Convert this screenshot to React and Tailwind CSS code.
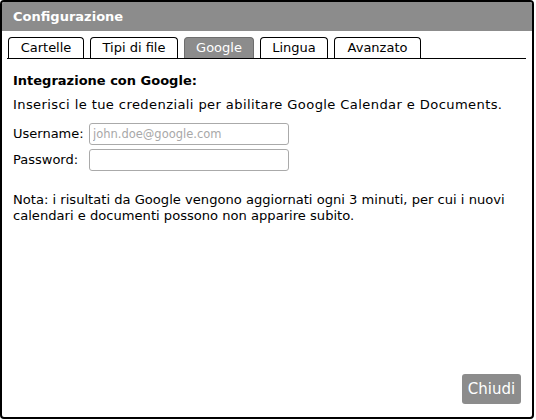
import React from 'react'

const tabs = [
  { label: 'Cartelle', w: 'w-[76px]' },
  { label: 'Tipi di file', w: 'w-[88px]' },
  { label: 'Google', w: 'w-[70px]', active: true },
  { label: 'Lingua', w: 'w-[68px]' },
  { label: 'Avanzato', w: 'w-[87px]' },
]

export default function App() {
  return (
    <div className="w-[536px] h-[420px] bg-white" style={{ fontFamily: '"DejaVu Sans", Verdana, sans-serif' }}>
      <div className="w-[534px] h-[419px] border-2 border-black rounded-[4px] flex flex-col overflow-hidden text-[13.1px] text-black">
        {/* title bar */}
        <div className="h-[29px] bg-[#8c8c8c] flex items-center pl-[11px] pt-[1px]">
          <span className="text-white font-bold text-[13px]">Configurazione</span>
        </div>

        <div className="flex-1 flex flex-col px-[5px] pt-[6px] pb-[13px]">
          {/* tabs */}
          <div className="flex gap-[6px] pl-[1px] border-b border-black mr-[1px]">
            {tabs.map((t) => (
              <div
                key={t.label}
                className={
                  t.active
                    ? `${t.w} h-[21px] flex items-center justify-center rounded-t-[4px] border border-b-0 border-[#6e6e6e] bg-[#8c8c8c] text-white text-[13px]`
                    : `${t.w} h-[21px] flex items-center justify-center rounded-t-[4px] border border-b-0 border-black bg-white text-[13px]`
                }
              >
                {t.label}
              </div>
            ))}
          </div>

          <div className="px-[6px] flex-1 flex flex-col">
            <div className="mt-[14px] font-bold leading-[16px] text-[13px]">Integrazione con Google:</div>
            <div className="mt-[8px] leading-[16px] whitespace-nowrap tracking-[0.38px]">Inserisci le tue credenziali per abilitare Google Calendar e Documents.</div>

            <div className="mt-[10px] flex flex-col gap-[4px]">
              <div className="flex items-center">
                <label className="w-[76px] leading-[16px] text-[13px]">Username:</label>
                <input
                  type="text"
                  placeholder="john.doe@google.com"
                  className="w-[200px] h-[22px] border border-[#aaaaaa] rounded-[3px] px-[3px] text-[11.5px] placeholder:text-[#a8a8a8] outline-none"
                />
              </div>
              <div className="flex items-center">
                <label className="w-[76px] leading-[16px] text-[13px]">Password:</label>
                <input
                  type="password"
                  className="w-[200px] h-[22px] border border-[#aaaaaa] rounded-[3px] px-[3px] text-[11.5px] outline-none"
                />
              </div>
            </div>

            <p className="mt-[21px] leading-[16px] whitespace-nowrap">
              Nota: i risultati da Google vengono aggiornati ogni 3 minuti, per cui i nuovi
              <br />
              calendari e documenti possono non apparire subito.
            </p>

            <div className="mt-auto flex justify-end">
              <button className="w-[59px] h-[30px] bg-[#8c8c8c] text-white text-[15px] rounded-[3px]">Chiudi</button>
            </div>
          </div>
        </div>
      </div>
    </div>
  )
}
